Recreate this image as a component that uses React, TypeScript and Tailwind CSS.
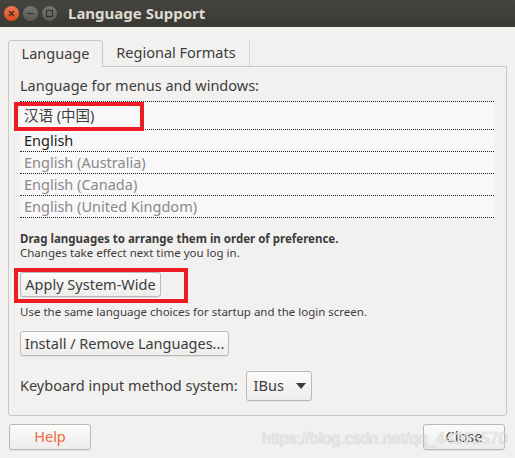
import React from "react";

const font = "font-['Noto_Sans','Noto_Sans_CJK_SC',sans-serif]";

function Btn({ children, className = "" }: { children: React.ReactNode; className?: string }) {
  return (
    <div
      className={`flex items-center justify-center rounded-[3px] border border-[#bab9b5] bg-gradient-to-b from-[#fbfbfa] to-[#eeedeb] shadow-[0_1px_0_rgba(0,0,0,0.06)] ${className}`}
    >
      {children}
    </div>
  );
}

export default function App() {
  const rows = [
    { t: "English", c: "text-[#222222]" },
    { t: "English (Australia)", c: "text-[#8a8a8a]" },
    { t: "English (Canada)", c: "text-[#8a8a8a]" },
    { t: "English (United Kingdom)", c: "text-[#8a8a8a]" },
  ];
  return (
    <div className={`w-[515px] h-[458px] bg-[#f2f1f0] flex flex-col ${font} text-[#3c3c3c] overflow-hidden`}>
      {/* title bar */}
      <div className="h-[27px] bg-gradient-to-b from-[#45443f] to-[#3a3935] flex items-center pl-[4px]">
        <div className="w-[15px] h-[15px] rounded-full bg-gradient-to-b from-[#f37a4f] to-[#e0481c] flex items-center justify-center">
          <svg width="7" height="7" viewBox="0 0 7 7">
            <path d="M1 1L6 6M6 1L1 6" stroke="#3b2a22" strokeWidth="1.3" />
          </svg>
        </div>
        <div className="ml-[4px] w-[15px] h-[15px] rounded-full bg-gradient-to-b from-[#76756f] to-[#5a5954] flex items-center justify-center">
          <div className="w-[7px] h-[1.5px] bg-[#2f2e2b]" />
        </div>
        <div className="ml-[4px] w-[15px] h-[15px] rounded-full bg-gradient-to-b from-[#76756f] to-[#5a5954] flex items-center justify-center">
          <div className="w-[7px] h-[7px] border-[1.3px] border-[#2f2e2b]" />
        </div>
        <div className="ml-[11px] text-[15px] font-bold text-[#dfdbd2] leading-none">Language Support</div>
      </div>

      {/* notebook */}
      <div className="mt-[12px] ml-[8px] w-[499px] flex flex-col">
        <div className="flex h-[27px] items-end">
          <div className="h-[27px] w-[95px] border border-b-0 border-[#c9c7c3] rounded-t-[4px] bg-[#f2f1f0] flex items-center justify-center text-[14.5px] relative z-10 -mb-[1px] pb-[1px]">
            Language
          </div>
          <div className="h-[26px] w-[147px] border-r border-[#d8d6d2] flex items-center justify-center text-[14.5px] text-[#3c3c3c]">
            Regional Formats
          </div>
          <div className="flex-1" />
        </div>
        <div className="h-[350px] border border-[#c9c7c3] rounded-b-[3px] relative flex flex-col px-[11px]">
          <div className="mt-[9px] h-[20px] flex items-center text-[14.5px]">Language for menus and windows:</div>
          <div className="mt-[5px] w-[474px] bg-[#f8f8f8] border-t border-dotted border-[#222]">
            <div className="h-[28px] border-b border-dotted border-[#222] flex items-center pl-[4px] text-[14.5px] text-[#3c3c3c]">
              汉语 (中国)
            </div>
            {rows.map((r) => (
              <div key={r.t} className={`h-[22px] border-b border-dotted border-[#222] flex items-center pl-[4px] text-[14.5px] ${r.c}`}>
                {r.t}
              </div>
            ))}
          </div>
          <div className="mt-[14px] text-[11.5px] leading-[14px] font-bold">Drag languages to arrange them in order of preference.</div>
          <div className="text-[11.5px] leading-[13px]">Changes take effect next time you log in.</div>
          <Btn className="mt-[13px] w-[141px] h-[25px] text-[14.5px]">Apply System-Wide</Btn>
          <div className="mt-[7px] text-[11.5px] leading-[16px]">Use the same language choices for startup and the login screen.</div>
          <Btn className="mt-[11px] w-[209px] h-[25px] text-[14.5px]">Install / Remove Languages...</Btn>
          <div className="mt-[15px] flex items-center">
            <div className="text-[14.5px]">Keyboard input method system:</div>
            <Btn className="ml-[8px] w-[66px] h-[30px] text-[14.5px] !justify-start pl-[7px]">
              <span>IBus</span>
              <svg className="ml-[12px]" width="10" height="6" viewBox="0 0 10 6">
                <path d="M0 0H10L5 6Z" fill="#3c3c3c" />
              </svg>
            </Btn>
          </div>

          {/* red highlight boxes */}
          <div className="absolute left-[5px] top-[35px] w-[130px] h-[29px] border-[4px] border-[#ec1c24]" />
          <div className="absolute left-[5px] top-[201px] w-[174px] h-[35px] border-[4px] border-[#ec1c24]" />
        </div>
      </div>

      {/* bottom buttons */}
      <div className="mt-[8px] flex items-center relative px-[9px]">
        <Btn className="w-[82px] h-[26px] text-[14.5px] text-[#f0663a]">Help</Btn>
        <div className="flex-1" />
        <Btn className="w-[82px] h-[26px] text-[14.5px] mr-[1px]">Close</Btn>
        <div className="absolute left-[262px] top-[3px] text-[16px] font-['Liberation_Sans',sans-serif] text-white/70 [text-shadow:0_0_1px_rgba(120,120,120,0.6)] pointer-events-none whitespace-nowrap">
          https://blog.csdn.net/qq_44365570
        </div>
      </div>
    </div>
  );
}
